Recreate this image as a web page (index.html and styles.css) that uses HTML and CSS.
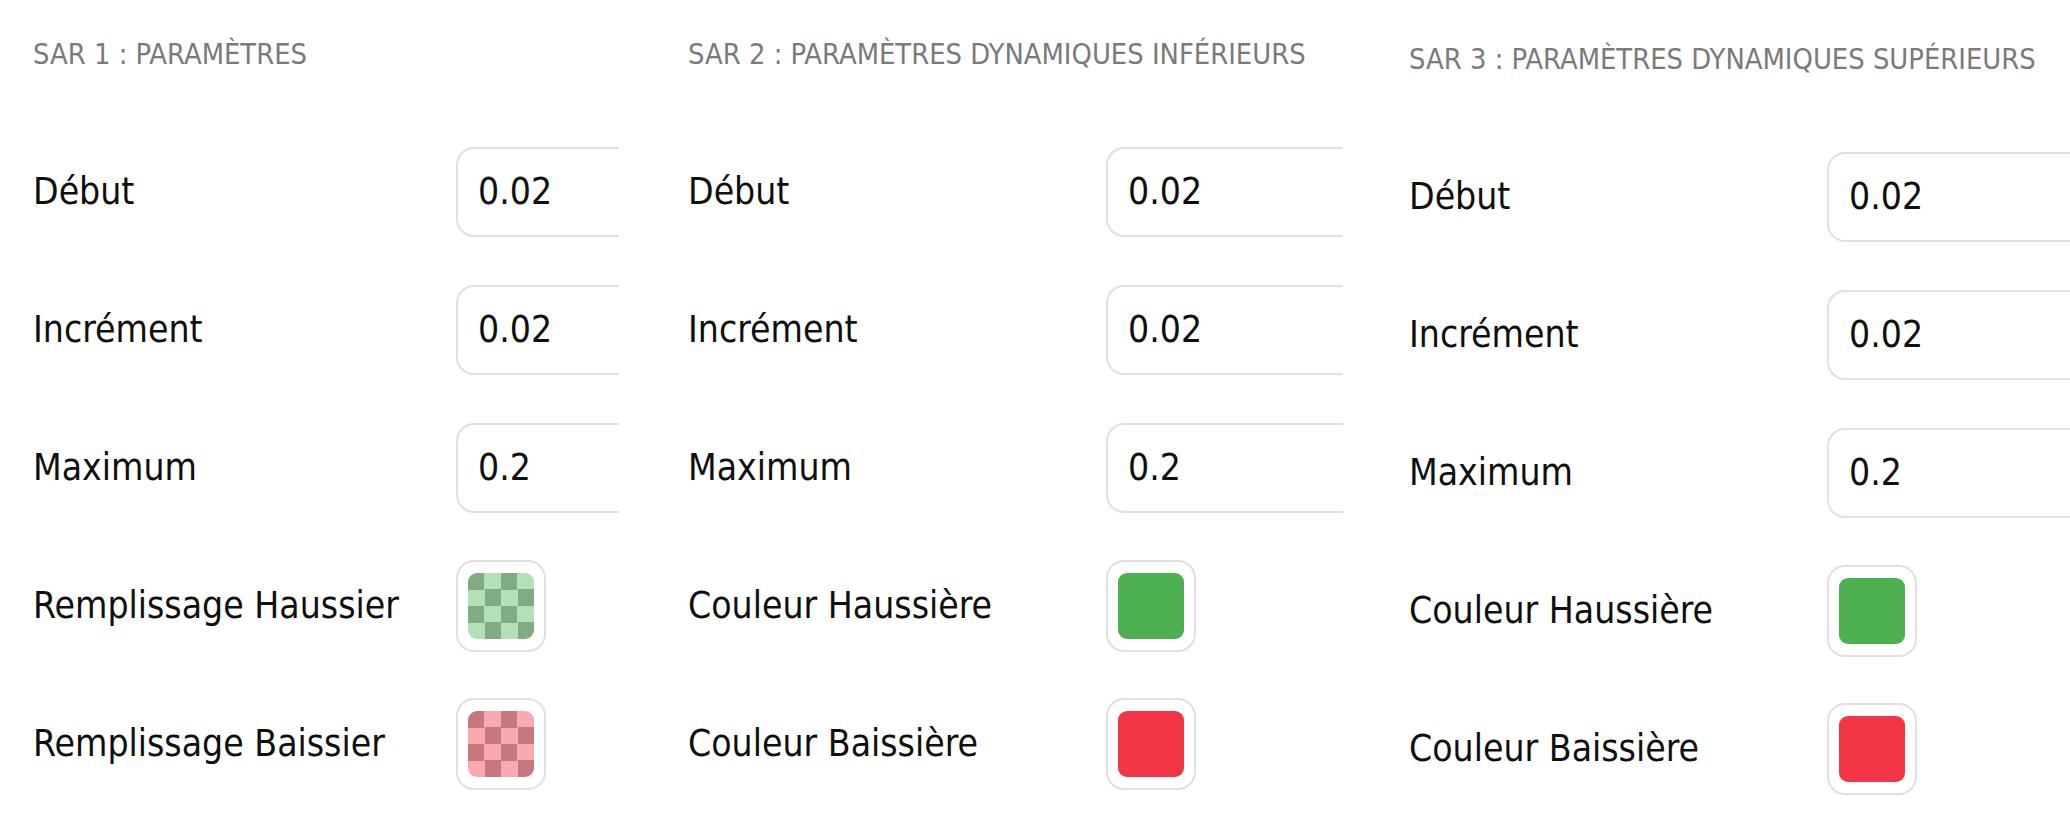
FILE: index.html
```html
<!DOCTYPE html>
<html lang="fr">
<head>
<meta charset="utf-8">
<title>SAR paramètres</title>
<link rel="stylesheet" href="styles.css">
</head>
<body>
<div class="page">
  <section class="panel panel-1">
    <h2 class="title">SAR 1 : PARAMÈTRES</h2>
    <div class="rows">
      <div class="row"><span class="label">Début</span><div class="input">0.02</div></div>
      <div class="row"><span class="label">Incrément</span><div class="input">0.02</div></div>
      <div class="row"><span class="label">Maximum</span><div class="input">0.2</div></div>
      <div class="row"><span class="label">Remplissage Haussier</span><div class="swatch"><span class="chip fill-up"></span></div></div>
      <div class="row"><span class="label">Remplissage Baissier</span><div class="swatch"><span class="chip fill-down"></span></div></div>
    </div>
  </section>
  <section class="panel panel-2">
    <h2 class="title">SAR 2 : PARAMÈTRES DYNAMIQUES INFÉRIEURS</h2>
    <div class="rows">
      <div class="row"><span class="label">Début</span><div class="input">0.02</div></div>
      <div class="row"><span class="label">Incrément</span><div class="input">0.02</div></div>
      <div class="row"><span class="label">Maximum</span><div class="input">0.2</div></div>
      <div class="row"><span class="label">Couleur Haussière</span><div class="swatch"><span class="chip solid-up"></span></div></div>
      <div class="row"><span class="label">Couleur Baissière</span><div class="swatch"><span class="chip solid-down"></span></div></div>
    </div>
  </section>
  <section class="panel panel-3">
    <h2 class="title">SAR 3 : PARAMÈTRES DYNAMIQUES SUPÉRIEURS</h2>
    <div class="rows">
      <div class="row"><span class="label">Début</span><div class="input">0.02</div></div>
      <div class="row"><span class="label">Incrément</span><div class="input">0.02</div></div>
      <div class="row"><span class="label">Maximum</span><div class="input">0.2</div></div>
      <div class="row"><span class="label">Couleur Haussière</span><div class="swatch"><span class="chip solid-up"></span></div></div>
      <div class="row"><span class="label">Couleur Baissière</span><div class="swatch"><span class="chip solid-down"></span></div></div>
    </div>
  </section>
</div>
</body>
</html>
```
FILE: styles.css
```css
html, body {
  margin: 0;
  padding: 0;
  background: #ffffff;
}
body {
  width: 2070px;
  height: 840px;
  overflow: hidden;
  font-family: "DejaVu Sans Condensed", "DejaVu Sans", sans-serif;
  color: #0f0f0f;
}
.page {
  display: flex;
  gap: 36px;
  align-items: flex-start;
}
.panel {
  box-sizing: border-box;
  overflow: hidden;
  padding: 36px 0 0 33px;
  flex: none;
}
.panel-1 { width: 619px; }
.panel-2 { width: 688px; }
.panel-3 { width: 694px; margin-left: -3px; padding-top: 41px; }
.title {
  margin: 0;
  font-size: 28.8px;
  font-weight: normal;
  line-height: 36px;
  color: #7a7a7a;
  white-space: nowrap;
}
.rows {
  margin-top: 74px;
  display: flex;
  flex-direction: column;
  gap: 46px;
}
.row {
  display: grid;
  grid-template-columns: 418px auto;
  align-items: center;
  height: 92px;
}
.panel-1 .row { grid-template-columns: 423px auto; }
.label {
  font-size: 37px;
  line-height: 44px;
  white-space: nowrap;
}
.input {
  box-sizing: border-box;
  width: 400px;
  height: 90px;
  border: 2px solid #e0e0e0;
  border-radius: 18px;
  padding-left: 20px;
  font-size: 37px;
  line-height: 86px;
  color: #0f0f0f;
}
.swatch {
  box-sizing: border-box;
  width: 90px;
  height: 92px;
  border: 2px solid #e0e0e0;
  border-radius: 18px;
  display: flex;
  align-items: center;
  justify-content: center;
}
.chip {
  display: block;
  width: 66px;
  height: 66px;
  border-radius: 9px;
}
.fill-up {
  background: repeating-conic-gradient(#b3e0b5 0 25%, #7fac82 0 50%) 0 0 / 33px 33px;
}
.fill-down {
  background: repeating-conic-gradient(#f9a9b0 0 25%, #c9777f 0 50%) 0 0 / 33px 33px;
}
.solid-up { background: #4caf50; }
.solid-down { background: #f23645; }
```
